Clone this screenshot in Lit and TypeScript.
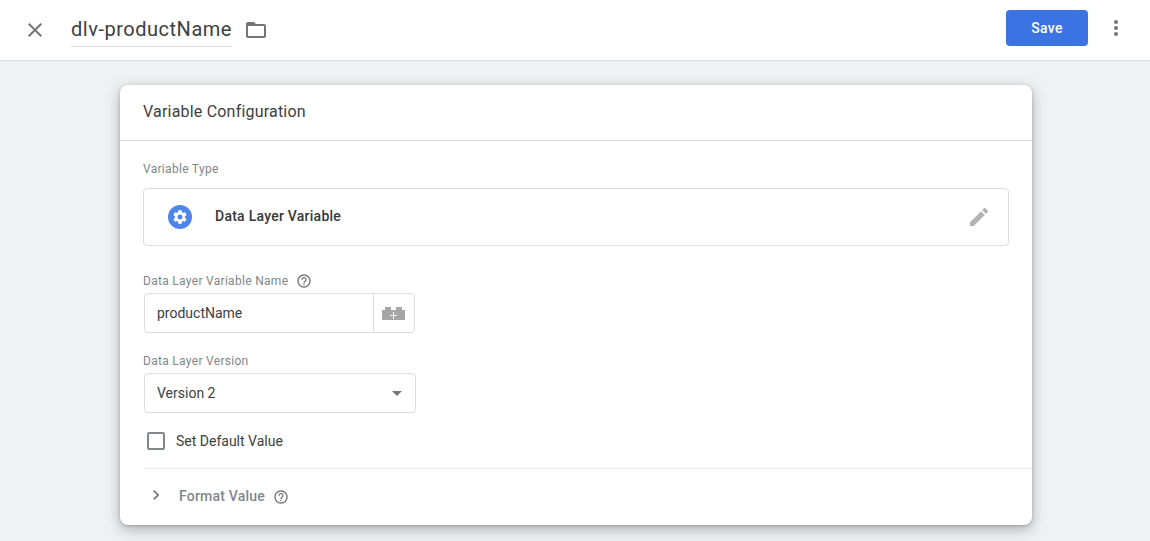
import { LitElement, html, css } from "lit";
import { customElement } from "lit/decorators.js";

const help = (cls: string) => html`<svg class=${cls} width="16" height="16" viewBox="0 0 24 24" fill="#757575"><path d="M11 18h2v-2h-2v2zm1-16C6.48 2 2 6.48 2 12s4.48 10 10 10 10-4.48 10-10S17.52 2 12 2zm0 18c-4.41 0-8-3.59-8-8s3.59-8 8-8 8 3.59 8 8-3.59 8-8 8zm0-14c-2.21 0-4 1.79-4 4h2c0-1.1.9-2 2-2s2 .9 2 2c0 2-3 1.75-3 5h2c0-2.25 3-2.5 3-5 0-2.21-1.79-4-4-4z"/></svg>`;

@customElement("app-root")
export class AppRoot extends LitElement {
  static styles = css`
    :host {
      display: block;
      width: 1150px;
      height: 541px;
      overflow: hidden;
      background: #f0f1f3;
      font-family: Roboto, "Liberation Sans", sans-serif;
      color: #212121;
    }
    .top {
      height: 60px;
      background: #fff;
      border-bottom: 1px solid #d9dadc;
      display: flex;
      align-items: center;
      padding-left: 23px;
      padding-right: 26px;
    }
    .close { display: block; margin-right: 24px; margin-top: -1px; }
    .name {
      font-size: 20px;
      line-height: 24px;
      color: #3c4043;
      padding: 4px 0 5px;
      border-bottom: 1px solid #dadce0;
      letter-spacing: 0.52px;
    }
    .folder { display: block; margin-left: 12px; }
    .spacer { flex: 1; }
    .save {
      width: 82px;
      height: 36px;
      margin-top: -4px;
      background: #3b73e2;
      border-radius: 4px;
      color: #fff;
      font-size: 14px;
      font-weight: 500;
      letter-spacing: 0.3px;
      display: flex;
      align-items: center;
      justify-content: center;
    }
    .more { display: block; margin-left: 16px; margin-right: -4px; margin-top: -4px; }
    .card {
      width: 912px;
      height: 440px;
      margin: 24px 0 0 120px;
      background: #fff;
      border-radius: 8px;
      box-shadow: 0 4px 14px rgba(60, 64, 67, 0.38), 0 1px 3px rgba(60, 64, 67, 0.25);
      display: flex;
      flex-direction: column;
    }
    .head {
      border-bottom: 1px solid #dcdddf;
      padding-left: 23px;
      padding-bottom: 2px;
      box-sizing: border-box;
      height: 56px;
      display: flex;
      align-items: center;
      font-size: 16px;
      color: #3c4043;
      letter-spacing: 0.2px;
    }
    .body { padding: 21px 23px 0 23px; display: flex; flex-direction: column; }
    .label {
      font-size: 12px;
      line-height: 14px;
      color: #80868b;
      letter-spacing: 0.3px;
      display: flex;
      align-items: center;
      gap: 8px;
    }
    .type {
      height: 56px;
      margin-top: 12px;
      border: 1px solid #dcdddf;
      border-radius: 4px;
      display: flex;
      align-items: center;
      padding: 0 17px 0 24px;
      font-size: 14px;
      font-weight: 500;
      letter-spacing: 0.25px;
      color: #35383b;
    }
    .type span { margin-top: -2px; }
    .gear { display: block; margin-right: 23px; }
    .type .spacer { flex: 1; }
    .pencil { display: block; }
    .label.l2 { margin-top: 27px; height: 16px; }
    .input {
      width: 269px;
      height: 38px;
      margin: 4px 0 0 1px;
      border: 1px solid #dcdddf;
      border-radius: 4px;
      display: flex;
      font-size: 14px;
      color: #3c4043;
    }
    .input .val { width: 228px; box-sizing: border-box; padding-left: 12px; display: flex; align-items: center; }
    .input .add { flex: 1; border-left: 1px solid #dcdddf; display: flex; align-items: center; justify-content: center; padding-right: 1px; }
    .label.l3 { margin-top: 21px; }
    .select {
      height: 38px;
      margin: 5px 0 0 1px;
      border: 1px solid #dcdddf;
      border-radius: 4px;
      display: flex;
      align-items: center;
      justify-content: space-between;
      padding: 0 13px 0 12px;
      width: 245px;
      font-size: 14px;
      color: #3c4043;
    }
    .arrow { width: 0; height: 0; border-left: 5px solid transparent; border-right: 5px solid transparent; border-top: 5px solid #757575; }
    .check {
      display: flex;
      align-items: center;
      margin: 18px 0 0 4px;
      font-size: 14px;
      line-height: 20px;
      color: #3c4043;
    }
    .box { width: 14px; height: 14px; border: 2px solid #80868b; border-radius: 2px; margin-right: 11px; }
    .format {
      margin-left: 24px;
      margin-top: 17px;
      border-top: 1px solid #e6e6e8;
      height: 53px;
      padding-bottom: 2px;
      display: flex;
      align-items: center;
      font-size: 14px;
      font-weight: 500;
      letter-spacing: 0.2px;
      color: #80868b;
    }
    .chev { display: block; margin-left: 2px; margin-right: 13px; margin-top: -1px; }
    .fhelp { display: block; margin-left: 8px; margin-top: 2px; }
  `;

  render() {
    return html`
      <div class="top">
        <svg class="close" width="24" height="24" viewBox="0 0 24 24" fill="#757575"><path d="M19 6.41 17.59 5 12 10.59 6.41 5 5 6.41 10.59 12 5 17.59 6.41 19 12 13.41 17.59 19 19 17.59 13.41 12z"/></svg>
        <div class="name">dlv-productName</div>
        <svg class="folder" width="24" height="24" viewBox="0 0 24 24" fill="#757575"><path d="M20 6h-8l-2-2H4c-1.1 0-1.99.9-1.99 2L2 18c0 1.1.9 2 2 2h16c1.1 0 2-.9 2-2V8c0-1.1-.9-2-2-2zm0 12H4V8h16v10z"/></svg>
        <div class="spacer"></div>
        <div class="save">Save</div>
        <svg class="more" width="24" height="24" viewBox="0 0 24 24" fill="#757575"><circle cx="12" cy="6" r="2"/><circle cx="12" cy="12" r="2"/><circle cx="12" cy="18" r="2"/></svg>
      </div>
      <div class="card">
        <div class="head">Variable Configuration</div>
        <div class="body">
          <div class="label">Variable Type</div>
          <div class="type">
            <svg class="gear" width="24" height="24" viewBox="0 0 24 24"><circle cx="12" cy="12" r="12" fill="#4f85eb"/><g transform="translate(3.6 3.6) scale(.7)"><path fill="#fff" d="M19.14 12.94c.04-.3.06-.61.06-.94 0-.32-.02-.64-.07-.94l2.03-1.58a.49.49 0 0 0 .12-.61l-1.92-3.32a.488.488 0 0 0-.59-.22l-2.39.96c-.5-.38-1.03-.7-1.62-.94l-.36-2.54a.484.484 0 0 0-.48-.41h-3.84c-.24 0-.43.17-.47.41l-.36 2.54c-.59.24-1.13.57-1.62.94l-2.39-.96c-.22-.08-.47 0-.59.22L2.74 8.87c-.12.21-.08.47.12.61l2.03 1.58c-.05.3-.09.63-.09.94s.02.64.07.94l-2.03 1.58a.49.49 0 0 0-.12.61l1.92 3.32c.12.22.37.29.59.22l2.39-.96c.5.38 1.03.7 1.62.94l.36 2.54c.05.24.24.41.48.41h3.84c.24 0 .44-.17.47-.41l.36-2.54c.59-.24 1.13-.56 1.62-.94l2.39.96c.22.08.47 0 .59-.22l1.92-3.32c.12-.22.07-.47-.12-.61l-2.01-1.58zM12 15.6c-1.98 0-3.6-1.62-3.6-3.6s1.62-3.6 3.6-3.6 3.6 1.62 3.6 3.6-1.62 3.6-3.6 3.6z"/></g></svg>
            <span>Data Layer Variable</span>
            <div class="spacer"></div>
            <svg class="pencil" width="24" height="24" viewBox="0 0 24 24" fill="#b3b3b3"><path d="M3 17.25V21h3.75L17.81 9.94l-3.75-3.75L3 17.25zM20.71 7.04a1 1 0 0 0 0-1.41l-2.34-2.34a1 1 0 0 0-1.41 0l-1.83 1.83 3.75 3.75 1.83-1.83z"/></svg>
          </div>
          <div class="label l2">Data Layer Variable Name ${help("h")}</div>
          <div class="input">
            <div class="val">productName</div>
            <div class="add">
              <svg width="23" height="13" viewBox="0 0 23 13"><path fill="#a6a6a6" d="M0 3h3V0h6v3h5V0h6v3h3v10H0z"/><path fill="#fff" d="M11 5h1v3h3v1h-3v3h-1V9H8V8h3z"/></svg>
            </div>
          </div>
          <div class="label l3">Data Layer Version</div>
          <div class="select"><span>Version 2</span><span class="arrow"></span></div>
          <div class="check"><span class="box"></span><span>Set Default Value</span></div>
        </div>
        <div class="format">
          <svg class="chev" width="20" height="20" viewBox="0 0 24 24" fill="#757575"><path d="M10 6 8.59 7.41 13.17 12l-4.58 4.59L10 18l6-6z"/></svg>
          <span>Format Value</span>
          ${help("fhelp")}
        </div>
      </div>
    `;
  }
}
